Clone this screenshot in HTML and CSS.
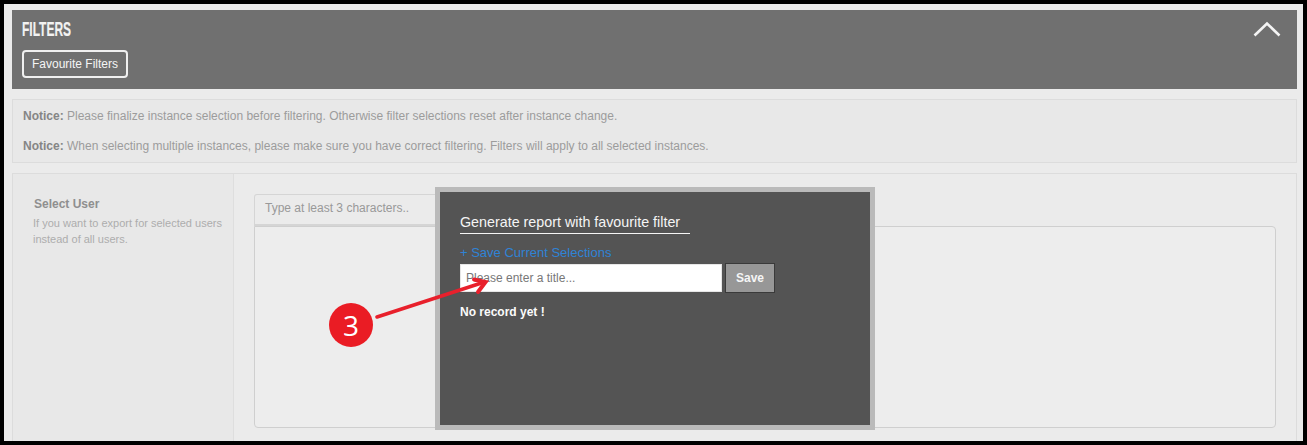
FILE: index.html
```html
<!DOCTYPE html>
<html lang="en">
<head>
<meta charset="utf-8">
<title>Filters</title>
<link rel="stylesheet" href="styles.css">
</head>
<body>
<div class="frame">
  <div class="page">
    <header class="bar">
      <div class="bar-left">
        <h1 class="bar-title">FILTERS</h1>
        <button class="fav-btn" type="button">Favourite Filters</button>
      </div>
      <svg class="chevron" width="28" height="16" viewBox="0 0 28 16"><path d="M1.5 14.5 14 2.500 26.5 14.5" fill="none" stroke="#f4f4f4" stroke-width="2.6"/></svg>
    </header>
    <section class="notices">
      <p class="notice"><b>Notice:</b> Please finalize instance selection before filtering. Otherwise filter selections reset after instance change.</p>
      <p class="notice"><b>Notice:</b> When selecting multiple instances, please make sure you have correct filtering. Filters will apply to all selected instances.</p>
    </section>
    <section class="panel">
      <div class="side">
        <div class="side-title">Select User</div>
        <div class="side-help">If you want to export for selected users instead of all users.</div>
      </div>
      <div class="main">
        <div class="search">Type at least 3 characters..</div>
        <div class="listbox"></div>
      </div>
    </section>
  </div>
  <aside class="modal">
    <div class="modal-title">Generate report with favourite filter</div>
    <div class="modal-link">+ Save Current Selections</div>
    <div class="modal-form">
      <div class="title-input">Please enter a title...</div>
      <button class="save-btn" type="button">Save</button>
    </div>
    <div class="empty">No record yet !</div>
  </aside>
  <svg class="arrow" width="120" height="50" viewBox="0 0 120 50"><path d="M7 47 113 12.500" fill="none" stroke="#e8202c" stroke-width="3.600" stroke-linecap="round"/><path d="M104 9.500 115.500 12 108 22" fill="none" stroke="#e8202c" stroke-width="4" stroke-linecap="round"/></svg>
  <div class="badge">3</div>
</div>
</body>
</html>
```

FILE: styles.css
```css
* { box-sizing: border-box; }
html, body { margin: 0; padding: 0; }
body {
  width: 1307px;
  height: 445px;
  overflow: hidden;
  background: #000;
  font-family: "Liberation Sans", Arial, sans-serif;
}
.frame {
  position: relative;
  width: 1307px;
  height: 445px;
  padding: 4px;
  background: #000;
}
.page {
  height: 437px;
  width: 1299px;
  padding: 6px 6px 0 8px;
  background: #ebebeb;
  overflow: hidden;
}
.bar {
  display: flex;
  justify-content: space-between;
  height: 79px;
  padding: 9px 16px 0 10px;
  background: #707070;
}
.bar-title {
  width: 70px;
  margin: 0 0 11px;
  font-size: 20px;
  line-height: 20px;
  font-weight: 700;
  color: #f2f2f2;
  -webkit-text-stroke: 0.2px #f2f2f2;
  transform: scaleX(0.6);
  transform-origin: left center;
}
.fav-btn {
  display: block;
  width: 106px;
  height: 28px;
  padding: 0;
  border: 2px solid #f0f0f0;
  border-radius: 4px;
  background: transparent;
  color: #f5f5f5;
  font: 12px "Liberation Sans", sans-serif;
}
.chevron { margin-top: 2px; }
.notices {
  height: 64px;
  margin-top: 10px;
  padding: 1px 10px;
  background: #e8e8e8;
  border: 1px solid #dcdcdc;
}
.notice {
  margin: 0;
  font-size: 12px;
  line-height: 30px;
  color: #9c9c9c;
}
.notice b { color: #858585; }
.panel {
  display: flex;
  height: 280px;
  margin-top: 10px;
  border: 1px solid #dcdcdc;
}
.side {
  width: 221px;
  padding: 22px 8px 0 20px;
  background: #e8e8e8;
  border-right: 1px solid #dedede;
}
.side-title {
  margin-left: 1px;
  font-size: 12px;
  line-height: 16px;
  font-weight: 700;
  color: #8f8f8f;
}
.side-help {
  margin-top: 3px;
  font-size: 11px;
  line-height: 16px;
  color: #adadad;
}
.main {
  flex: 1;
  padding: 20px 20px 0;
  background: #ebebeb;
}
.search {
  width: 190px;
  height: 32px;
  padding-left: 10px;
  border: 1px solid #d5d5d5;
  border-width: 1px 1px 2px;
  border-radius: 3px 0 0 0;
  font-size: 12px;
  line-height: 27px;
  color: #999;
  background: #ebebeb;
}
.listbox {
  height: 202px;
  border: 1px solid #cfcfcf;
  border-radius: 0 4px 4px 4px;
  background: #ededed;
}
.modal {
  position: absolute;
  left: 435px;
  top: 187px;
  width: 440px;
  height: 243px;
  padding: 21px 20px 0;
  background: #545454;
  border: 5px solid #bababa;
  color: #fff;
}
.modal-title {
  width: 230px;
  height: 21px;
  border-bottom: 1px solid #f5f5f5;
  font-size: 14.3px;
  line-height: 18px;
  color: #f5f5f5;
}
.modal-link {
  margin-top: 10px;
  font-size: 13px;
  line-height: 17px;
  color: #2f83d6;
}
.modal-form {
  display: flex;
  gap: 3px;
  margin-top: 3px;
}
.title-input {
  width: 262px;
  height: 28px;
  padding-left: 5px;
  background: #fff;
  border: 1px solid #e6e6e6;
  font-size: 12px;
  line-height: 27px;
  color: #777;
}
.save-btn {
  width: 50px;
  height: 30px;
  margin-top: -1px;
  padding: 0;
  background: #979797;
  border: 1px solid #3a3a3a;
  color: #f5f5f5;
  font: 700 12px "Liberation Sans", sans-serif;
}
.empty {
  margin-top: 11px;
  font-size: 12px;
  line-height: 16px;
  font-weight: 700;
  color: #fbfbfb;
}
.arrow {
  position: absolute;
  left: 370px;
  top: 270px;
}
.badge {
  position: absolute;
  left: 329px;
  top: 303px;
  width: 44px;
  height: 44px;
  border-radius: 50%;
  background: #ea1c24;
  color: #fff;
  font: 400 28px/44px "Open Sans", sans-serif;
  text-align: center;
}
```
